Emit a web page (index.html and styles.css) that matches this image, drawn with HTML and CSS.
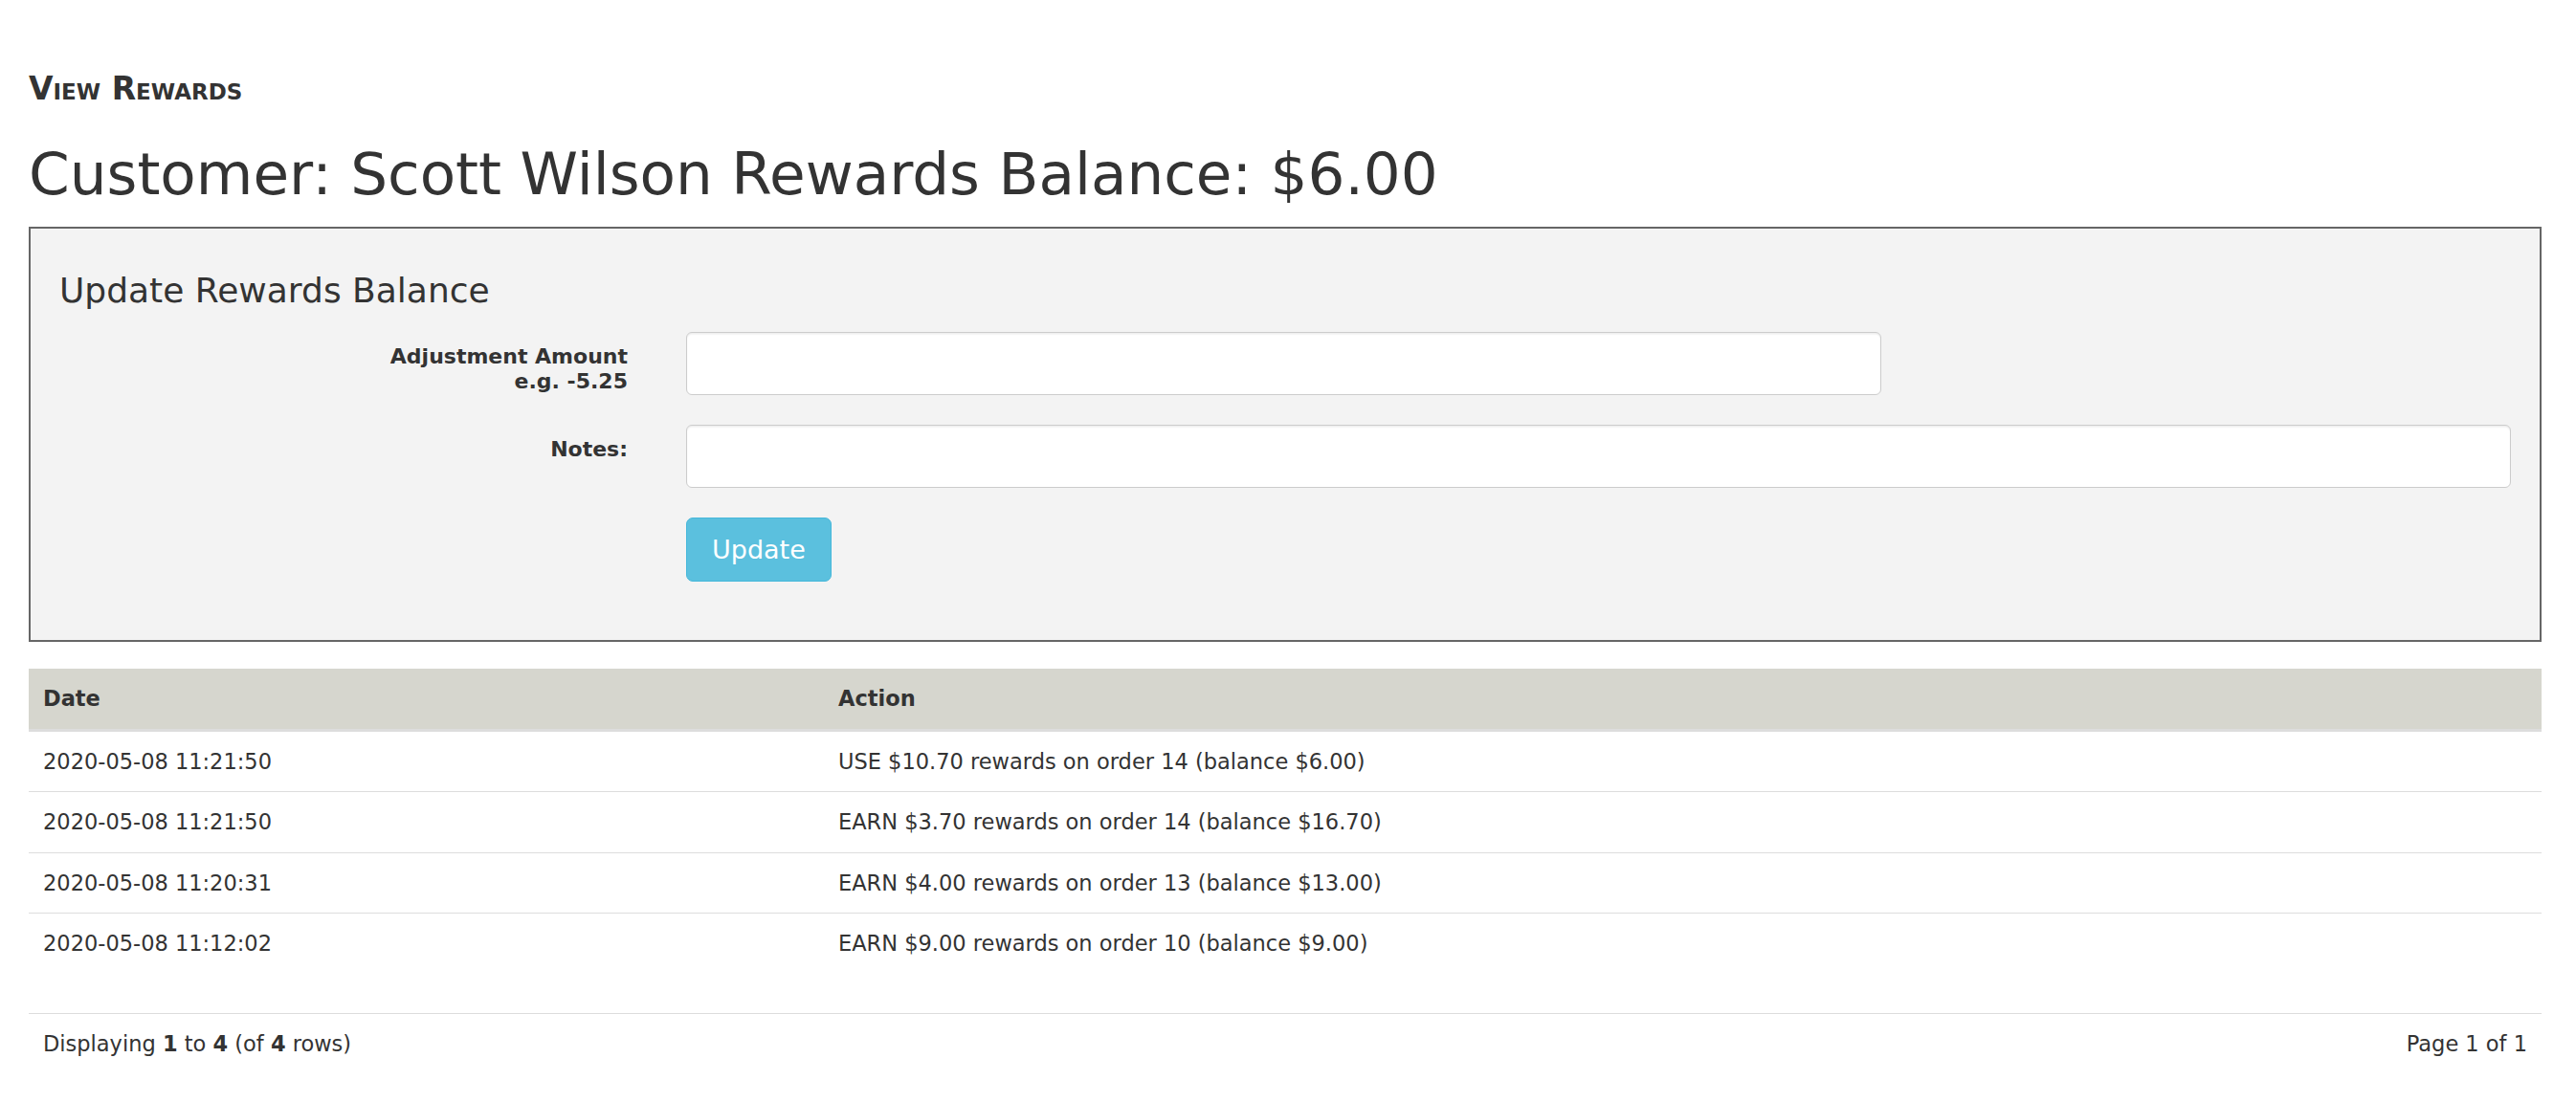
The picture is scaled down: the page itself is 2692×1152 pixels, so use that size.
FILE: index.html
```html
<!DOCTYPE html>
<html lang="en">
<head>
<meta charset="utf-8">
<title>View Rewards</title>
<link rel="stylesheet" href="styles.css">
</head>
<body>
<div class="page">
  <div class="kicker">View Rewards</div>
  <h1 class="title">Customer: Scott Wilson Rewards Balance: $6.00</h1>

  <section class="panel">
    <h2 class="panel-title">Update Rewards Balance</h2>
    <form class="form">
      <div class="form-row">
        <label class="form-label">Adjustment Amount<br>e.g. -5.25</label>
        <div class="form-field"><input class="input input-short" type="text"></div>
      </div>
      <div class="form-row">
        <label class="form-label">Notes:</label>
        <div class="form-field"><input class="input" type="text"></div>
      </div>
      <div class="form-row">
        <div class="form-label"></div>
        <div class="form-field"><button class="btn" type="button">Update</button></div>
      </div>
    </form>
  </section>

  <table class="grid">
    <thead>
      <tr><th class="col-date">Date</th><th>Action</th></tr>
    </thead>
    <tbody>
      <tr><td>2020-05-08 11:21:50</td><td>USE $10.70 rewards on order 14 (balance $6.00)</td></tr>
      <tr><td>2020-05-08 11:21:50</td><td>EARN $3.70 rewards on order 14 (balance $16.70)</td></tr>
      <tr><td>2020-05-08 11:20:31</td><td>EARN $4.00 rewards on order 13 (balance $13.00)</td></tr>
      <tr><td>2020-05-08 11:12:02</td><td>EARN $9.00 rewards on order 10 (balance $9.00)</td></tr>
    </tbody>
  </table>

  <div class="pager">
    <div>Displaying <b>1</b> to <b>4</b> (of <b>4</b> rows)</div>
    <div>Page 1 of 1</div>
  </div>
</div>
</body>
</html>
```
FILE: styles.css
```css
html, body {
  margin: 0;
  padding: 0;
  background: #ffffff;
}
body {
  font-family: "DejaVu Sans", Verdana, sans-serif;
  font-size: 22.5px;
  color: #333333;
}
.page {
  padding: 75px 36px 0 30px;
}
.kicker {
  font-size: 33px;
  line-height: 36px;
  font-weight: bold;
  font-variant: small-caps;
}
.title {
  margin: 37px 0 0 0;
  font-size: 61.2px;
  line-height: 67px;
  font-weight: normal;
}
.panel {
  margin-top: 22px;
  border: 2px solid #666666;
  background: #f3f3f3;
  padding: 30px;
}
.panel-title {
  margin: 15px 0 23px 0;
  font-size: 36px;
  line-height: 40px;
  font-weight: normal;
}
.form {
  display: flex;
  flex-direction: column;
  gap: 31px;
  padding-bottom: 31px;
}
.form-row {
  display: grid;
  grid-template-columns: 594px 1fr;
  column-gap: 61px;
  align-items: start;
}
.form-label {
  text-align: right;
  font-weight: bold;
  font-size: 22px;
  line-height: 26px;
  padding-top: 13px;
}
.input {
  display: block;
  box-sizing: border-box;
  width: 100%;
  height: 66px;
  background: #ffffff;
  border: 1.5px solid #cccccc;
  border-radius: 6px;
  box-shadow: inset 0 1.5px 1.5px rgba(0, 0, 0, 0.075);
  padding: 0 18px;
  font-family: inherit;
  font-size: 22.5px;
}
.input-short {
  width: 1249px;
}
.btn {
  display: block;
  box-sizing: border-box;
  height: 67px;
  padding: 0 26px;
  background: #5bc0de;
  border: 1.5px solid #46b8da;
  border-radius: 7px;
  color: #ffffff;
  font-family: inherit;
  font-size: 27px;
  line-height: 36px;
}
.grid {
  margin-top: 28px;
  width: 100%;
  border-collapse: collapse;
  border-spacing: 0;
}
.grid th,
.grid td {
  text-align: left;
  padding: 15px;
  line-height: 32.5px;
  font-size: 22.5px;
  vertical-align: top;
}
.grid th {
  background: #d6d6ce;
  font-weight: bold;
  border-bottom: 3px solid #dddddd;
}
.grid td {
  border-top: 1.5px solid #dddddd;
}
.grid tbody tr:first-child td {
  border-top: 0;
}
.col-date {
  width: 801px;
}
.pager {
  margin-top: 41px;
  border-top: 1.5px solid #dddddd;
  padding: 15px;
  line-height: 32.5px;
  display: flex;
  justify-content: space-between;
}
.pager b {
  font-weight: bold;
}
```
